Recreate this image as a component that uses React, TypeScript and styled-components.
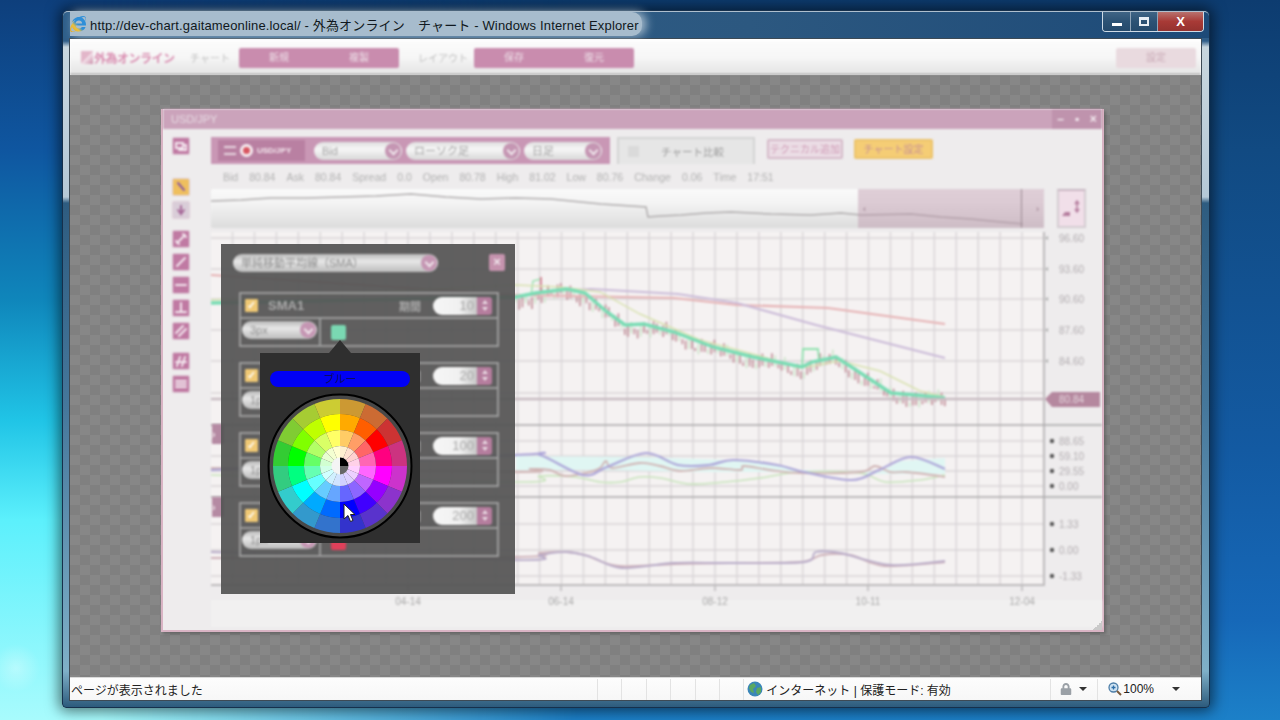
import styled, { createGlobalStyle } from "styled-components";
import { FaInternetExplorer, FaLock } from "react-icons/fa";

const JP = `"Liberation Sans", "Noto Sans CJK JP", sans-serif`;

// the page content is soft in the picture, the colour picker stays crisper
const soft = "filter: blur(0.8px);";

const GlobalStyle = createGlobalStyle`
  html, body {
    margin: 0;
    height: 100%;
    overflow: hidden;
  }
  * {
    box-sizing: border-box;
  }
`;

/* ---------- desktop + IE window ---------- */
const Desktop = styled.div`
  position: relative;
  width: 1280px;
  height: 720px;
  overflow: hidden;
  background:
    radial-gradient(circle at 16px 668px, rgba(255, 255, 255, 0.32), transparent 24px),
    linear-gradient(
      180deg,
      #0e3f7c 0,
      #0f56a0 150px,
      #0f86bb 300px,
      #20c4e6 420px,
      #5cf0fc 520px,
      #a8fbfd 720px
    );

  &::before {
    content: "";
    position: absolute;
    inset: 0;
    background: linear-gradient(180deg, #0d3c70 0, #114a82 150px, #135aa2 450px, #1668b8 620px, #1c80c8 720px);
    -webkit-mask-image: linear-gradient(90deg, transparent 8%, #000 45%);
    mask-image: linear-gradient(90deg, transparent 8%, #000 45%);
  }
`;

const BrowserWindow = styled.div`
  position: absolute;
  left: 62px;
  top: 10px;
  width: 1148px;
  height: 698px;
  display: flex;
  flex-direction: column;
  border: 1px solid #16304c;
  border-radius: 6px 6px 4px 4px;
  box-shadow: 0 0 14px 3px rgba(0, 0, 0, 0.55);
  background: linear-gradient(
    180deg,
    #3c668e 0,
    #2f5d88 30px,
    #c8d6de 36px,
    #b5c8d6 186px,
    #2e5c80 192px,
    #46789c 400px,
    #7fb0c8 660px,
    #2a587a 697px
  );
`;

const TitleBar = styled.div`
  height: 27px;
  display: flex;
  align-items: flex-start;
  padding-left: 7px;
  background: linear-gradient(90deg, #2f5f8a 0, #2c5880 60%, #1d4a78 100%);
  border-radius: 5px 5px 0 0;
  border-top: 1px solid #aebfce;
  position: relative;
`;

const TitleGlow = styled.div`
  display: flex;
  align-items: center;
  gap: 4px;
  height: 24px;
  width: 572px;
  background: #a7bccd;
  border-radius: 0 10px 10px 0;
  box-shadow: 4px 0 10px #a7bccd;
`;

const TitleText = styled.span`
  font: 13px ${JP};
  letter-spacing: 0.15px;
  color: #101820;
  white-space: nowrap;
`;

const WindowButtons = styled.div`
  position: absolute;
  top: 0;
  right: 5px;
  height: 20px;
  display: flex;
  border: 1px solid #cfdbe6;
  border-top: none;
  border-radius: 0 0 4px 4px;
  overflow: hidden;
`;

const WindowButton = styled.div<{ $close?: boolean }>`
  width: ${(p) => (p.$close ? "46px" : "27px")};
  display: flex;
  align-items: center;
  justify-content: center;
  border-left: 1px solid #8fa4b8;
  color: #fff;
  font: bold 13px "Liberation Sans", sans-serif;
  background: ${(p) =>
    p.$close
      ? "linear-gradient(180deg, #b8726e 0, #a83a36 50%, #94322f 100%)"
      : "linear-gradient(180deg, #3f6485 0, #2c5274 50%, #254a6c 100%)"};

  &:first-child {
    border-left: none;
  }
`;

const MinGlyph = styled.i`
  display: block;
  width: 10px;
  height: 3px;
  margin-top: 6px;
  background: #fff;
`;

const MaxGlyph = styled.i`
  display: block;
  width: 10px;
  height: 9px;
  border: 2px solid #e8eef4;
  border-top-width: 3px;
`;

const ClientFrame = styled.div`
  flex: 1;
  display: flex;
  flex-direction: column;
  margin: 0 7px 6px 6px;
  border: 1px solid #3d4a55;
  min-height: 0;
  background: #fff;
`;

const Page = styled.div`
  flex: 1;
  display: flex;
  flex-direction: column;
  min-height: 0;
  overflow: hidden;
`;

/* ---------- site toolbar ---------- */
const SiteBar = styled.div`
  height: 36px;
  flex: none;
  display: flex;
  align-items: center;
  padding-left: 11px;
  border-top: 2px solid #fff;
  border-bottom: 1px solid #7e7e7e;
  background: linear-gradient(180deg, #fcfcfc 0, #f6f6f6 50%, #e4e4e4 100%);
  ${soft}
`;

const Logo = styled.div`
  display: flex;
  align-items: center;
  gap: 1px;
  width: 109px;
  color: #d98db0;
  font: bold 12px ${JP};
  letter-spacing: -0.5px;
  white-space: nowrap;
`;

const LogoMark = styled.i`
  display: block;
  width: 12px;
  height: 13px;
  background: linear-gradient(135deg, #e2b6c9 50%, #f6e6ee 50%, #c88aa6 100%);
`;

const BarLabel = styled.span<{ $w: number }>`
  width: ${(p) => p.$w}px;
  font: 10px ${JP};
  color: #c0c0c0;
  white-space: nowrap;
`;

const BarGroup = styled.div`
  width: 160px;
  height: 20px;
  display: flex;
  border-radius: 2px;
  background: #c98cae;
  margin-right: 19px;
`;

const BarAction = styled.span`
  flex: 1;
  text-align: center;
  font: 10px/20px ${JP};
  color: #ecdde6;
`;

const SettingsButton = styled.span`
  margin-left: auto;
  margin-right: 5px;
  width: 80px;
  height: 20px;
  border-radius: 2px;
  background: #e9dadf;
  color: #c9aab6;
  text-align: center;
  font: 10px/20px ${JP};
`;

/* ---------- dimmed stage + chart window ---------- */
const Stage = styled.div`
  flex: 1;
  padding: 34px 0 0 91px;
  min-height: 0;
  background: repeating-conic-gradient(#808080 0 25%, #878787 0 50%) 0 0 / 20px 20px;
`;

const ChartWindow = styled.div`
  position: relative;
  width: 943px;
  height: 523px;
  display: flex;
  flex-direction: column;
  border: 2px solid #d9b4c4;
  border-top: none;
  background: #eeeced;
  box-shadow: 2px 2px 3px rgba(60, 60, 60, 0.4);

  &::after {
    content: "";
    position: absolute;
    right: 0;
    bottom: 0;
    width: 9px;
    height: 9px;
    background: linear-gradient(135deg, transparent 50%, #c9c9c9 50%);
  }
`;

const ChartTitle = styled.div`
  height: 20px;
  flex: none;
  display: flex;
  align-items: center;
  justify-content: space-between;
  padding-left: 8px;
  background: #cba3bb;
  color: #e7dbe3;
  font: 11px "Liberation Sans", sans-serif;
  ${soft}
`;

const ChartControls = styled.div`
  height: 20px;
  width: 50px;
  display: flex;
  align-items: center;
  justify-content: space-around;
  background: #bf93ad;
  color: #f5edf2;
  font: bold 12px "Liberation Sans", sans-serif;
`;

const ChartBody = styled.div`
  flex: 1;
  display: flex;
  min-height: 0;
  ${soft}
`;

const Sidebar = styled.div`
  width: 48px;
  flex: none;
  display: flex;
  flex-direction: column;
  padding: 8px 0 0 9px;
`;

const SideGroup = styled.div<{ $after: number }>`
  display: flex;
  flex-direction: column;
  gap: 5px;
  margin-bottom: ${(p) => p.$after}px;
`;

const SideIcon = styled.div<{ $tone?: "pink" | "orange" | "pale" }>`
  width: 18px;
  height: 18px;
  display: flex;
  align-items: center;
  justify-content: center;
  border-radius: 2px;
  border: 1px solid #e0cdd8;
  background: ${(p) =>
    p.$tone === "orange" ? "#efbf5e" : p.$tone === "pale" ? "#d9cdd8" : "#c07aa3"};
`;

const Main = styled.div`
  flex: 1;
  display: flex;
  flex-direction: column;
  padding-top: 8px;
  min-width: 0;
`;

const ToolRow = styled.div`
  height: 27px;
  flex: none;
  display: flex;
  align-items: flex-start;
`;

const SymbolBar = styled.div`
  width: 399px;
  height: 27px;
  display: flex;
  align-items: center;
  padding-left: 7px;
  gap: 4px;
  background: #c997b5;
`;

const SymbolTag = styled.div`
  width: 87px;
  height: 21px;
  margin-right: 5px;
  display: flex;
  align-items: center;
  gap: 4px;
  padding-left: 6px;
  background: #b980a2;
  color: #f4e9ef;
  font: bold 8px "Liberation Sans", sans-serif;
`;

const SymbolDot = styled.i`
  display: block;
  width: 13px;
  height: 13px;
  border-radius: 50%;
  border: 3px solid #f6eef2;
  background: #d85560;
`;

const SymbolFlag = styled.i`
  display: block;
  width: 12px;
  height: 9px;
  border-top: 2px solid #e8d6e0;
  border-bottom: 2px solid #e8d6e0;
`;

const PillSelect = styled.div<{ $w: number; $dim?: boolean }>`
  position: relative;
  width: ${(p) => p.$w}px;
  height: 18px;
  flex: none;
  padding-left: 8px;
  border-radius: 9px;
  color: ${(p) => (p.$dim ? "#909090" : "#a6a6a6")};
  font: 11px/18px ${JP};
  white-space: nowrap;
  overflow: hidden;
  background: linear-gradient(
    180deg,
    ${(p) => (p.$dim ? "#b8b8b8, #e8e8e8 40%, #bcbcbc" : "#e0e0e0, #f6f6f6 40%, #d8d8d8")}
  );
`;

const PillArrow = styled.i`
  position: absolute;
  right: 1px;
  top: 1px;
  width: 16px;
  height: 16px;
  border-radius: 50%;
  background: #c596b3;

  &::after {
    content: "";
    position: absolute;
    left: 5px;
    top: 4px;
    width: 5px;
    height: 5px;
    border-right: 2px solid #eee3ea;
    border-bottom: 2px solid #eee3ea;
    transform: rotate(45deg);
  }
`;

const CompareTab = styled.div`
  width: 138px;
  height: 27px;
  margin-left: 7px;
  display: flex;
  align-items: center;
  gap: 22px;
  padding-left: 9px;
  border: 2px solid #d4d4d4;
  border-bottom: none;
  background: #e6e6e6;
  color: #9c9c9c;
  font: 10.5px ${JP};
`;

const TabCheck = styled.i`
  display: block;
  width: 11px;
  height: 11px;
  background: #dadada;
`;

const ActionChip = styled.div<{ $active?: boolean; $w: number; $ml: number }>`
  width: ${(p) => p.$w}px;
  height: 20px;
  margin: 2px 0 0 ${(p) => p.$ml}px;
  text-align: center;
  border-radius: 2px;
  font: 10px/17px ${JP};
  white-space: nowrap;
  border: 2px solid ${(p) => (p.$active ? "#ecc36c" : "#d5bac9")};
  background: ${(p) => (p.$active ? "#f5cd75" : "#ebdde5")};
  color: ${(p) => (p.$active ? "#c79095" : "#cf9bb6")};
`;

const InfoRow = styled.div`
  height: 14px;
  margin-top: 6px;
  flex: none;
  display: flex;
  gap: 11px;
  padding-left: 12px;
  font: 10.5px/14px "Liberation Sans", sans-serif;
  color: #b2b2b2;
`;

const InfoValue = styled.span`
  margin-left: 11px;
`;

const OverviewRow = styled.div`
  height: 39px;
  margin-top: 5px;
  flex: none;
  display: flex;
`;

const Overview = styled.div`
  position: relative;
  width: 833px;
  border-radius: 2px;
  background: linear-gradient(180deg, #fafafa 0, #f4f4f4 35%, #dcdcdc 100%);
`;

const OverviewRange = styled.div`
  position: absolute;
  top: 0;
  bottom: 0;
  right: 0;
  width: 186px;
  padding: 0 5px;
  display: flex;
  align-items: center;
  justify-content: space-between;
  background: rgba(186, 146, 166, 0.42);
  color: #8d6f7f;
  font: 9px "Liberation Sans", sans-serif;
`;

const OverviewHandle = styled.i`
  position: absolute;
  top: 0;
  bottom: 0;
  right: 22px;
  width: 1px;
  background: #9b8a93;
`;

const ScaleToggle = styled.div`
  width: 29px;
  margin-left: 13px;
  border: 2px solid #d4ccd1;
  border-top-color: #c9b6c2;
  background: #f1dfe9;
`;

const ChartSvg = styled.svg`
  display: block;
  margin-top: 4px;
  flex: none;
`;

const PaneTab = styled.div<{ $top: number }>`
  position: absolute;
  left: 49px;
  top: ${(p) => p.$top}px;
  width: 12px;
  height: 20px;
  background: #b58aa3;
  color: #f1e7ec;
  font: bold 11px/20px "Liberation Sans", sans-serif;
  ${soft}
`;

/* ---------- SMA settings panel ---------- */
const Panel = styled.div`
  position: absolute;
  left: 58px;
  top: 135px;
  width: 294px;
  height: 350px;
  padding: 10px 10px 0 12px;
  background: rgba(84, 84, 84, 0.93);
`;

const PanelHead = styled.div`
  display: flex;
  align-items: flex-start;
  justify-content: space-between;
  ${soft}
`;

const PanelClose = styled.div`
  width: 16px;
  height: 17px;
  border-radius: 2px;
  background: #c593ae;
  color: #f2e8ee;
  text-align: center;
  font: bold 13px/16px "Liberation Sans", sans-serif;
`;

const GroupList = styled.div`
  display: flex;
  flex-direction: column;
  gap: 15px;
  margin: 20px 6px 0 6px;
  ${soft}
`;

const Group = styled.div`
  height: 55px;
  border: 2px solid #9b9b9b;
`;

const GroupTop = styled.div`
  height: 25px;
  display: flex;
  align-items: center;
  padding: 0 4px;
  border-bottom: 2px solid #9b9b9b;
`;

const CheckBox = styled.span`
  width: 13px;
  height: 13px;
  flex: none;
  border-radius: 1px;
  background: #efc874;
  color: #fff;
  text-align: center;
  font: bold 11px/13px "Liberation Sans", sans-serif;
`;

const SmaName = styled.span`
  margin-left: 10px;
  color: #a9a9a9;
  font: bold 13px "Liberation Sans", sans-serif;
`;

const PeriodLabel = styled.span`
  margin-left: auto;
  margin-right: 12px;
  color: #a9a9a9;
  font: bold 11px ${JP};
`;

const PeriodInput = styled.div`
  width: 44px;
  height: 18px;
  padding-right: 3px;
  text-align: right;
  border-radius: 9px 0 0 9px;
  color: #a8a8a8;
  font: 13px/18px "Liberation Sans", sans-serif;
  background: linear-gradient(90deg, #f6f6f6, #f0f0f0 60%, #c6c6c6);
`;

const Spinner = styled.div`
  width: 15px;
  height: 18px;
  margin-right: 1px;
  display: flex;
  flex-direction: column;
  align-items: center;
  justify-content: center;
  gap: 3px;
  border-radius: 0 3px 3px 0;
  background: #b57d9e;

  i {
    display: block;
    width: 0;
    height: 0;
    border-left: 3px solid transparent;
    border-right: 3px solid transparent;
  }
  i:first-child {
    border-bottom: 4px solid #ecdde6;
  }
  i:last-child {
    border-top: 4px solid #ecdde6;
  }
`;

const GroupBottom = styled.div`
  height: 26px;
  display: flex;
  align-items: center;
`;

const WidthCell = styled.div`
  width: 80px;
  height: 100%;
  padding: 2px 0 0 1px;
  border-right: 2px solid #9b9b9b;
`;

const Swatch = styled.i<{ $color: string }>`
  display: block;
  width: 15px;
  height: 15px;
  margin-left: 10px;
  border-radius: 2px;
  background: ${(p) => p.$color};
`;

/* ---------- colour picker ---------- */
const Picker = styled.div`
  position: absolute;
  left: 39px;
  top: 109px;
  width: 160px;
  height: 190px;
  padding-top: 18px;
  display: flex;
  flex-direction: column;
  align-items: center;
  gap: 6px;
  background: #2f2f2f;

  &::before {
    content: "";
    position: absolute;
    left: 69px;
    top: -13px;
    border-left: 11px solid transparent;
    border-right: 11px solid transparent;
    border-bottom: 13px solid #2f2f2f;
  }
`;

const ColorName = styled.div`
  width: 140px;
  height: 16px;
  border-radius: 8px;
  background: #0000f5;
  color: #0a0a66;
  text-align: center;
  font: 11px/16px ${JP};
`;

const Cursor = styled.svg`
  position: absolute;
  left: 83px;
  top: 150px;
`;

/* ---------- status bar ---------- */
const StatusBar = styled.div`
  height: 23px;
  flex: none;
  display: flex;
  align-items: center;
  border-top: 1px solid #d9d9d9;
  background: linear-gradient(180deg, #fdfdfd, #f7f7f7);
  font: 12px ${JP};
  color: #222;
`;

const StatusMessage = styled.span`
  width: 527px;
  padding-left: 1px;
  white-space: nowrap;
`;

const StatusCell = styled.span`
  width: 24.4px;
  height: 21px;
  border-left: 1px solid #e3e3e3;
`;

const ZoneCell = styled.div`
  width: 307px;
  height: 21px;
  display: flex;
  align-items: center;
  gap: 3px;
  padding-left: 3px;
  border-left: 1px solid #e3e3e3;
  white-space: nowrap;
`;

const SecurityCell = styled.div`
  width: 47px;
  height: 21px;
  display: flex;
  align-items: center;
  gap: 7px;
  padding-left: 9px;
  border-left: 1px solid #e3e3e3;
  color: #9aa0a6;
`;

const ZoomCell = styled.div`
  flex: 1;
  height: 21px;
  display: flex;
  align-items: center;
  padding-left: 10px;
  gap: 1px;
  border-left: 1px solid #e3e3e3;
`;

const DownArrow = styled.i<{ $ml?: number }>`
  display: block;
  width: 0;
  height: 0;
  margin-left: ${(p) => p.$ml ?? 0}px;
  border-left: 4px solid transparent;
  border-right: 4px solid transparent;
  border-top: 4px solid #333;
`;

/* ---------- data ---------- */
const smaRows = [
  { name: "SMA1", period: 10, width: "3px", color: "#7ad8b2" },
  { name: "SMA2", period: 20, width: "1px", color: "#d8e2a0" },
  { name: "SMA3", period: 100, width: "1px", color: "#e8b0b0" },
  { name: "SMA4", period: 200, width: "1px", color: "#e0405a" },
];

type Pt = [number, number];

const toPath = (pts: Pt[]) => pts.map((p, i) => `${i ? "L" : "M"}${p[0]} ${p[1]}`).join(" ");

// catmull-rom, the oscillator panes are round curves
const toCurve = (pts: Pt[]) => {
  let d = `M${pts[0][0]} ${pts[0][1]}`;
  for (let i = 0; i < pts.length - 1; i++) {
    const p0 = pts[Math.max(i - 1, 0)];
    const p1 = pts[i];
    const p2 = pts[i + 1];
    const p3 = pts[Math.min(i + 2, pts.length - 1)];
    d += ` C${p1[0] + (p2[0] - p0[0]) / 6} ${p1[1] + (p2[1] - p0[1]) / 6} ${p2[0] - (p3[0] - p1[0]) / 6} ${p2[1] - (p3[1] - p1[1]) / 6} ${p2[0]} ${p2[1]}`;
  }
  return d;
};

const yAt = (pts: Pt[], x: number) => {
  for (let i = 1; i < pts.length; i++) {
    if (x <= pts[i][0]) {
      const [x0, y0] = pts[i - 1];
      const [x1, y1] = pts[i];
      return y0 + ((y1 - y0) * (x - x0)) / (x1 - x0);
    }
  }
  return pts[pts.length - 1][1];
};

const sma1: Pt[] = [
  [211, 303], [516, 297], [536, 293], [567, 289], [585, 293], [607, 312], [625, 325], [644, 324],
  [674, 332], [713, 347], [753, 357], [802, 367], [812, 362], [836, 357], [856, 370], [891, 393],
  [915, 395], [945, 398],
];
const sma2: Pt[] = [
  [211, 300], [516, 285], [560, 287], [600, 292], [640, 314], [700, 340], [760, 356], [800, 368],
  [840, 361], [880, 371], [920, 391], [945, 397],
];
const sma3: Pt[] = [[211, 275], [516, 295], [674, 298], [737, 305], [828, 308], [945, 324]];
const sma4: Pt[] = [[575, 290], [591, 289], [678, 294], [737, 303], [816, 325], [945, 358]];

const rsiBlue: Pt[] = [
  [211, 470], [516, 455], [540, 455], [583, 475], [607, 467], [646, 453], [678, 465], [709, 465],
  [733, 460], [777, 465], [804, 472], [852, 480], [879, 470], [911, 457], [945, 469],
];
const rsiRose: Pt[] = [
  [211, 468], [516, 472], [530, 469], [550, 470], [565, 476], [590, 472], [600, 468], [606, 461],
  [612, 468], [640, 463], [660, 466], [680, 471], [710, 468], [740, 470], [744, 466], [770, 470],
  [800, 473], [860, 472], [875, 466], [890, 472], [905, 472], [925, 474], [945, 477],
];
const rsiGreen: Pt[] = [
  [211, 475], [516, 482], [540, 476], [575, 477], [600, 482], [620, 482], [640, 477], [660, 478],
  [690, 484], [725, 482], [760, 478], [800, 472], [860, 473], [885, 482], [920, 480], [945, 475],
];
const macdA: Pt[] = [
  [211, 552], [516, 560], [540, 555], [567, 552], [591, 557], [622, 568], [674, 563], [730, 563],
  [804, 562], [816, 552], [840, 553], [891, 565], [945, 561],
];
const macdB: Pt[] = [
  [211, 558], [516, 557], [540, 553], [567, 552], [585, 555], [618, 566], [674, 564], [730, 563],
  [800, 562], [822, 555], [850, 555], [885, 566], [945, 562],
];

const gridXs = Array.from({ length: 40 }, (_, i) => 408 + 21.93 * (i - 9)).filter(
  (x) => x > 212 && x <= 1045
);

const priceGrid = [238, 269, 299, 330, 361, 393];
const priceLabels = ["96.60", "93.60", "90.60", "87.60", "84.60"];
const rsiGrid: [number, string][] = [[441, "88.65"], [456, "59.10"], [471, "29.55"], [486, "0.00"]];
const macdGrid: [number, string][] = [[524, "1.33"], [550, "0.00"], [576, "-1.33"]];
const dateTicks: [number, string][] = [[408, "04-14"], [561, "06-14"], [715, "08-12"], [868, "10-11"], [1022, "12-04"]];

const candles = Array.from({ length: 135 }, (_, i) => {
  const x = 516 + i * 3.2;
  const mid = yAt(sma1, x) + 4 + Math.sin(i * 1.7) * 3 + Math.sin(i * 0.37) * 3;
  const len = 3 + Math.abs(Math.sin(i * 2.3)) * 10;
  return { x, y: mid - len / 2, len, up: i % 3 === 0 };
});

const PriceChart = () => (
  <ChartSvg width={891} height={395} viewBox="211 232 891 395">
    <rect x={211} y={232} width={833} height={353} fill="#f5f2f2" />
    <rect x={211} y={600} width={891} height={27} fill="#f1f0f0" />
    {gridXs.map((x) => (
      <line key={x} x1={x} x2={x} y1={232} y2={585} stroke="#dcd8da" strokeWidth={1.6} />
    ))}
    {priceGrid.map((y) => (
      <line key={y} x1={211} x2={1044} y1={y} y2={y} stroke="#d9d5d7" strokeWidth={1.6} />
    ))}
    {[...rsiGrid, ...macdGrid].map(([y]) => (
      <line key={y} x1={211} x2={1044} y1={y} y2={y} stroke="#d9d5d7" strokeWidth={1.6} />
    ))}
    <line x1={1044} x2={1044} y1={232} y2={586} stroke="#bdbabc" strokeWidth={2} />
    <line x1={211} x2={1044} y1={585} y2={585} stroke="#bdbabc" strokeWidth={2} />
    {dateTicks.map(([x, t]) => (
      <g key={t}>
        <line x1={x} x2={x} y1={585} y2={591} stroke="#bdbabc" strokeWidth={1.5} />
        <text x={x} y={605} textAnchor="middle" fontSize={10} fill="#aaa" fontFamily="Liberation Sans">
          {t}
        </text>
      </g>
    ))}

    {candles.map((c) => (
      <line
        key={c.x}
        x1={c.x}
        x2={c.x}
        y1={c.y}
        y2={c.y + c.len}
        stroke={c.up ? "#cfe6cd" : "#c4929c"}
        strokeWidth={1.7}
      />
    ))}
    <path d="M531 296 L533 281 L541 279 L542 293" fill="none" stroke="#9ce2b0" strokeWidth={1.5} />
    <line x1={541} x2={541} y1={277} y2={294} stroke="#d88a9a" strokeWidth={2} />
    <path d="M802 367 L803 349 L818 349 L819 360" fill="none" stroke="#8ee2ae" strokeWidth={1.8} />
    <path d={toPath(sma3)} fill="none" stroke="#e6b2b4" strokeWidth={2.2} />
    <path d={toPath(sma4)} fill="none" stroke="#cbbbd8" strokeWidth={2.2} />
    <path d={toPath(sma2)} fill="none" stroke="#d8e2b0" strokeWidth={1.4} />
    <path d={toPath(sma1)} fill="none" stroke="#78dcb4" strokeWidth={3.4} />

    <line x1={211} x2={1044} y1={399} y2={399} stroke="#c8bcc2" strokeWidth={2.4} />
    <line x1={211} x2={1102} y1={425} y2={425} stroke="#a9a7a8" strokeWidth={1.6} />
    <line x1={211} x2={1102} y1={497} y2={497} stroke="#a9a7a8" strokeWidth={1.6} />

    {priceLabels.map((t, i) => (
      <g key={t}>
        <path d={`M1045 ${priceGrid[i]} l3 -2 v4 z`} fill="#aaa" />
        <text x={1059} y={priceGrid[i] + 4} fontSize={10} fill="#b2adb0" fontFamily="Liberation Sans">
          {t}
        </text>
      </g>
    ))}
    <path d="M1045 399 L1052 392 H1100 V407 H1052 Z" fill="#b5889f" />
    <text x={1059} y={403} fontSize={10} fill="#e5d5dd" fontFamily="Liberation Sans">
      80.84
    </text>

    <path
      d="M516 456 L640 457 L760 461 L800 470 L880 472 L900 461 L945 458 L945 474 L880 474 L800 472 L700 472 L600 470 L516 470 Z"
      fill="#e0f6f3"
    />
    <path d={toCurve(rsiGreen)} fill="none" stroke="#c8e4bc" strokeWidth={1.6} />
    <path d={toCurve(rsiRose)} fill="none" stroke="#d0b4b4" strokeWidth={1.8} />
    <path d={toCurve(rsiBlue)} fill="none" stroke="#aba4d8" strokeWidth={2.2} />
    <path d={toCurve(macdB)} fill="none" stroke="#cdb0b8" strokeWidth={1.8} />
    <path d={toCurve(macdA)} fill="none" stroke="#b8abc8" strokeWidth={1.8} />

    {[...rsiGrid, ...macdGrid].map(([y, t]) => (
      <g key={y}>
        <circle cx={1052} cy={y} r={2.2} fill="#555" />
        <text x={1059} y={y + 4} fontSize={10} fill="#b2adb0" fontFamily="Liberation Sans">
          {t}
        </text>
      </g>
    ))}
  </ChartSvg>
);

/* hue per wedge, clockwise from 12 o'clock */
const hues = [40, 22, 0, 330, 300, 275, 255, 240, 215, 200, 180, 150, 120, 90, 75, 60];
const rings = [
  { inner: 52, outer: 67, fill: (h: number) => `hsl(${h} 60% 50%)` },
  { inner: 36, outer: 52, fill: (h: number) => `hsl(${h} 100% 50%)` },
  { inner: 20, outer: 36, fill: (h: number) => `hsl(${h} 100% 70%)` },
  { inner: 8, outer: 20, fill: (h: number) => `hsl(${h} 100% 91%)` },
];

const polar = (r: number, deg: number): string => {
  const a = ((deg - 90) * Math.PI) / 180;
  return `${(r * Math.cos(a)).toFixed(2)} ${(r * Math.sin(a)).toFixed(2)}`;
};

const wedge = (inner: number, outer: number, from: number, to: number) =>
  `M${polar(inner, from)} L${polar(outer, from)} A${outer} ${outer} 0 0 1 ${polar(outer, to)} L${polar(inner, to)} A${inner} ${inner} 0 0 0 ${polar(inner, from)} Z`;

const ColorWheel = () => (
  <svg width={146} height={146} viewBox="-73 -73 146 146">
    <circle r={71.5} fill="#484848" stroke="#000" strokeWidth={2} />
    {rings.map((ring) =>
      hues.map((h, i) => (
        <path
          key={`${ring.inner}-${i}`}
          d={wedge(ring.inner, ring.outer, i * 22.5, (i + 1) * 22.5)}
          fill={ring.fill(h)}
        />
      ))
    )}
    <circle r={8.5} fill="#f4f4f4" />
    <path d="M0 0 V-8.5 A8.5 8.5 0 0 1 8.5 0 Z" fill="#000" />
    <path d="M0 0 H8.5 A8.5 8.5 0 0 1 0 8.5 Z" fill="#666" />
  </svg>
);

const sideIcon = (d: string, stroke = "#f3e6ee") => (
  <svg width={14} height={14} viewBox="0 0 14 14">
    <path d={d} fill="none" stroke={stroke} strokeWidth={2} strokeLinecap="round" />
  </svg>
);

export default function App() {
  return (
    <>
      <GlobalStyle />
      <Desktop>
        <BrowserWindow>
          <TitleBar>
            <TitleGlow>
              <svg width={0} height={0} style={{ position: "absolute" }}>
                <linearGradient id="ieFill" x1="0" y1="1" x2="1" y2="0">
                  <stop offset="0" stopColor="#e8a820" />
                  <stop offset="0.32" stopColor="#e8c040" />
                  <stop offset="0.48" stopColor="#2f8fd8" />
                  <stop offset="1" stopColor="#2f8fd8" />
                </linearGradient>
              </svg>
              <FaInternetExplorer size={16} style={{ flex: "none", fill: "url(#ieFill)" }} />
              <TitleText>
                http://dev-chart.gaitameonline.local/ - 外為オンライン　チャート - Windows Internet Explorer
              </TitleText>
            </TitleGlow>
            <WindowButtons>
              <WindowButton>
                <MinGlyph />
              </WindowButton>
              <WindowButton>
                <MaxGlyph />
              </WindowButton>
              <WindowButton $close>X</WindowButton>
            </WindowButtons>
          </TitleBar>

          <ClientFrame>
            <Page>
              <SiteBar>
                <Logo>
                  <LogoMark />
                  外為オンライン
                </Logo>
                <BarLabel $w={49}>チャート</BarLabel>
                <BarGroup>
                  <BarAction>新規</BarAction>
                  <BarAction>複製</BarAction>
                </BarGroup>
                <BarLabel $w={56}>レイアウト</BarLabel>
                <BarGroup>
                  <BarAction>保存</BarAction>
                  <BarAction>復元</BarAction>
                </BarGroup>
                <SettingsButton>設定</SettingsButton>
              </SiteBar>

              <Stage>
                <ChartWindow>
                  <ChartTitle>
                    USD/JPY
                    <ChartControls>
                      <span>–</span>
                      <span>▪</span>
                      <span>×</span>
                    </ChartControls>
                  </ChartTitle>
                  <ChartBody>
                    <Sidebar>
                      <SideGroup $after={23}>
                        <SideIcon>{sideIcon("M2 4 H9 V9 H2 Z M9 6 H12 V11 H5")}</SideIcon>
                      </SideGroup>
                      <SideGroup $after={11}>
                        <SideIcon $tone="orange">{sideIcon("M4 3 L10 10", "#8a5aa0")}</SideIcon>
                        <SideIcon $tone="pale">{sideIcon("M7 3 V8 M4 7 L7 11 L10 7", "#a76a9a")}</SideIcon>
                      </SideGroup>
                      <SideGroup $after={12}>
                        <SideIcon>{sideIcon("M3 11 L11 3 M2 9 L5 12 M9 2 L12 5")}</SideIcon>
                        <SideIcon>{sideIcon("M3 11 L11 3")}</SideIcon>
                        <SideIcon>{sideIcon("M2 7 H12")}</SideIcon>
                        <SideIcon>{sideIcon("M7 2 V10 M2 11 H12")}</SideIcon>
                        <SideIcon>{sideIcon("M2 9 L9 2 M5 12 L12 5")}</SideIcon>
                      </SideGroup>
                      <SideGroup $after={0}>
                        <SideIcon>{sideIcon("M3 12 L6 3 M8 12 L11 3 M2 8 H12")}</SideIcon>
                        <SideIcon>{sideIcon("M2 4 H12 M2 7 H12 M2 10 H12")}</SideIcon>
                      </SideGroup>
                    </Sidebar>

                    <Main>
                      <ToolRow>
                        <SymbolBar>
                          <SymbolTag>
                            <SymbolFlag />
                            <SymbolDot />
                            USD/JPY
                          </SymbolTag>
                          <PillSelect $w={88}>
                            Bid
                            <PillArrow />
                          </PillSelect>
                          <PillSelect $w={114}>
                            ローソク足
                            <PillArrow />
                          </PillSelect>
                          <PillSelect $w={78}>
                            日足
                            <PillArrow />
                          </PillSelect>
                        </SymbolBar>
                        <CompareTab>
                          <TabCheck />
                          チャート比較
                        </CompareTab>
                        <ActionChip $w={76} $ml={12}>
                          テクニカル追加
                        </ActionChip>
                        <ActionChip $w={79} $ml={11} $active>
                          チャート設定
                        </ActionChip>
                      </ToolRow>

                      <InfoRow>
                        {[
                          ["Bid", "80.84"],
                          ["Ask", "80.84"],
                          ["Spread", "0.0"],
                          ["Open", "80.78"],
                          ["High", "81.02"],
                          ["Low", "80.76"],
                          ["Change", "0.06"],
                          ["Time", "17:51"],
                        ].map(([label, value]) => (
                          <span key={label}>
                            {label}
                            <InfoValue>{value}</InfoValue>
                          </span>
                        ))}
                      </InfoRow>

                      <OverviewRow>
                        <Overview>
                          <svg width={833} height={39} viewBox="0 0 833 39">
                            <path
                              d="M0 12 L30 11 L60 9 L95 9 L130 8 L165 7 L200 5 L235 8 L270 10 L305 9 L340 10 L390 15 L435 18 L437 28 L450 27 L470 26 L495 24 L520 23 L560 25 L600 26 L630 24 L650 26 L700 25 L730 28 L760 30 L790 33 L812 35"
                              fill="none"
                              stroke="#b0adae"
                              strokeWidth={1.5}
                            />
                          </svg>
                          <OverviewRange>
                            <span>‹</span>
                            <OverviewHandle />
                            <span>›</span>
                          </OverviewRange>
                        </Overview>
                        <ScaleToggle>
                          <svg width={25} height={35} viewBox="0 0 25 35">
                            <path d="M3 25 H11 V21 H6 Z" fill="#b57d9e" />
                            <path d="M18 11 V20 M16 13 L18 10 L20 13 M16 18 L18 21 L20 18" stroke="#b57d9e" strokeWidth={1.5} fill="none" />
                          </svg>
                        </ScaleToggle>
                      </OverviewRow>

                      <PriceChart />
                    </Main>
                  </ChartBody>

                  <PaneTab $top={315}>›</PaneTab>
                  <PaneTab $top={388}>›</PaneTab>

                  <Panel>
                    <PanelHead>
                      <PillSelect $w={205} $dim>
                        単純移動平均線（SMA）
                        <PillArrow />
                      </PillSelect>
                      <PanelClose>×</PanelClose>
                    </PanelHead>

                    <GroupList>
                      {smaRows.map((row) => (
                        <Group key={row.name}>
                          <GroupTop>
                            <CheckBox>✓</CheckBox>
                            <SmaName>{row.name}</SmaName>
                            <PeriodLabel>期間</PeriodLabel>
                            <PeriodInput>{row.period}</PeriodInput>
                            <Spinner>
                              <i />
                              <i />
                            </Spinner>
                          </GroupTop>
                          <GroupBottom>
                            <WidthCell>
                              <PillSelect $w={75} $dim>
                                {row.width}
                                <PillArrow />
                              </PillSelect>
                            </WidthCell>
                            <Swatch $color={row.color} />
                          </GroupBottom>
                        </Group>
                      ))}
                    </GroupList>

                    <Picker>
                      <ColorName>ブルー</ColorName>
                      <ColorWheel />
                      <Cursor width={13} height={20} viewBox="0 0 13 20">
                        <path d="M1 1 V16 L5 12.5 L7.5 18.5 L10 17.5 L7.5 11.5 H12 Z" fill="#fff" stroke="#222" strokeWidth={1} />
                      </Cursor>
                    </Picker>
                  </Panel>
                </ChartWindow>
              </Stage>
            </Page>

            <StatusBar>
              <StatusMessage>ページが表示されました</StatusMessage>
              <StatusCell />
              <StatusCell />
              <StatusCell />
              <StatusCell />
              <StatusCell />
              <StatusCell />
              <ZoneCell>
                <svg width={16} height={16} viewBox="0 0 16 16">
                  <circle cx={8} cy={8} r={7.5} fill="#3a86b8" />
                  <path d="M3 4 L7 2 L9 5 L6 8 L7 12 L4 11 L2 7 Z M10 7 L14 6 L14 11 L11 14 L9 11 Z" fill="#5aa860" />
                </svg>
                インターネット | 保護モード: 有効
              </ZoneCell>
              <SecurityCell>
                <FaLock size={12} />
                <DownArrow />
              </SecurityCell>
              <ZoomCell>
                <svg width={14} height={14} viewBox="0 0 14 14">
                  <circle cx={5.5} cy={5.5} r={4.5} fill="#cfe3f2" stroke="#4d7ea8" strokeWidth={1.3} />
                  <path d="M3.5 5.5 H7.5 M5.5 3.5 V7.5" stroke="#2d6ea8" strokeWidth={1.3} />
                  <path d="M9 9 L13 13" stroke="#7a5a3c" strokeWidth={2} />
                </svg>
                100%
                <DownArrow $ml={17} />
              </ZoomCell>
            </StatusBar>
          </ClientFrame>
        </BrowserWindow>
      </Desktop>
    </>
  );
}
